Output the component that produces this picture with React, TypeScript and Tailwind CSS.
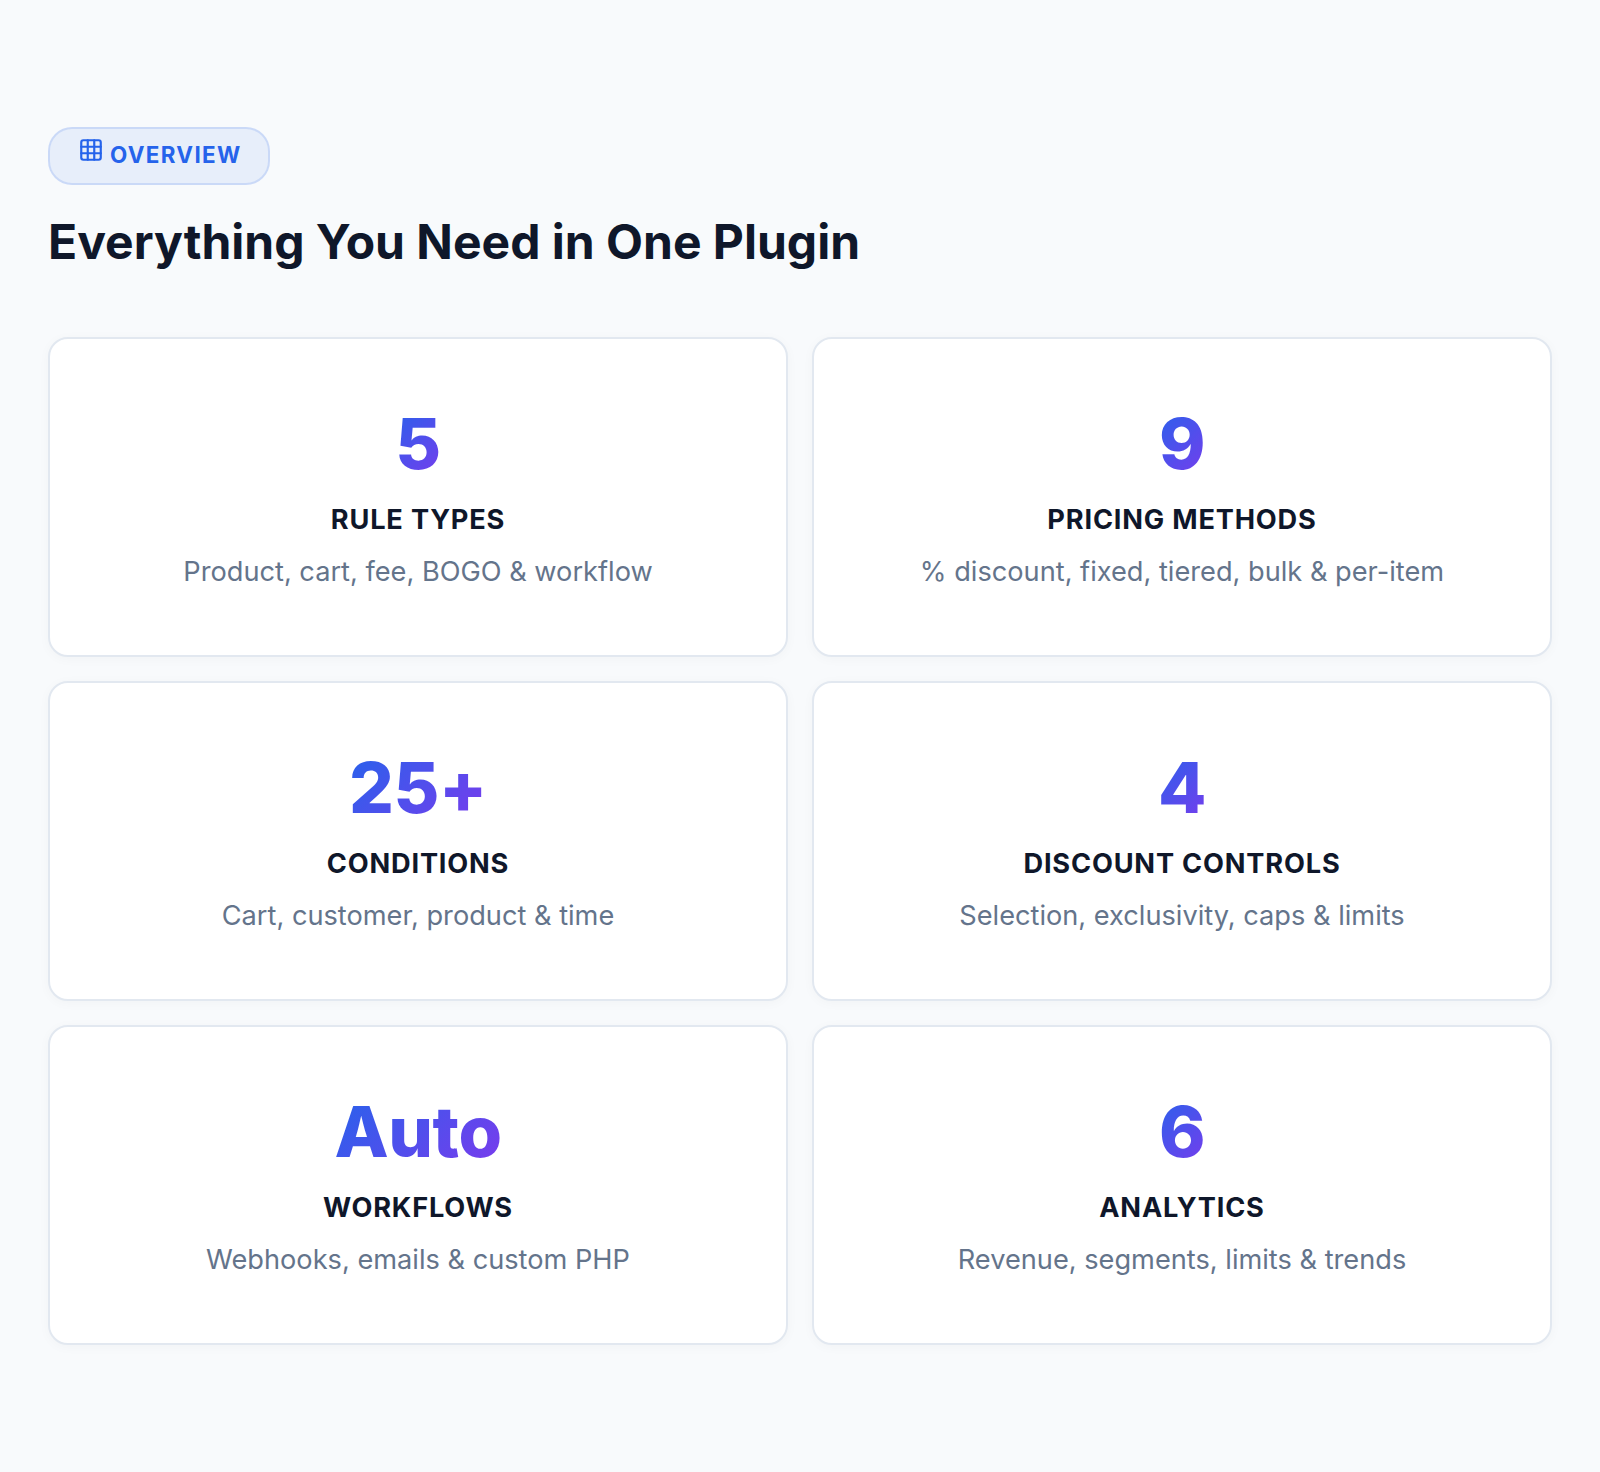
import { Grid3x3 } from "lucide-react";

const cards = [
  ["5", "RULE TYPES", "Product, cart, fee, BOGO & workflow"],
  ["9", "PRICING METHODS", "% discount, fixed, tiered, bulk & per-item"],
  ["25+", "CONDITIONS", "Cart, customer, product & time"],
  ["4", "DISCOUNT CONTROLS", "Selection, exclusivity, caps & limits"],
  ["Auto", "WORKFLOWS", "Webhooks, emails & custom PHP"],
  ["6", "ANALYTICS", "Revenue, segments, limits & trends"],
];

export default function App() {
  return (
    <div className="min-h-[1472px] bg-[#f8fafc] px-12 pt-[127px] font-['Inter',sans-serif]">
      <div className="inline-flex h-[58px] items-center gap-[6px] rounded-[24px] border-2 border-[#2563eb]/15 bg-[#2563eb]/[0.08] pl-[28px] pr-[26px] text-[#2563eb]">
        <Grid3x3 className="mb-[13px] h-[26px] w-[26px]" strokeWidth={2} />
        <span className="-mt-[3px] text-[22.4px] font-bold tracking-[0.06em]">OVERVIEW</span>
      </div>
      <h2 className="mt-[28px] text-[48px] font-bold leading-[1.2] text-[#0f172a]">Everything You Need in One Plugin</h2>
      <div className="mt-[66px] grid grid-cols-2 gap-6">
        {cards.map(([n, t, d]) => (
          <div key={t} className="flex h-[320px] flex-col items-center rounded-[20px] border-2 border-[#e2e8f0] bg-white pt-[63px] text-center shadow-[0_2px_12px_rgba(15,23,42,0.03)]">
            <div className="bg-[linear-gradient(135deg,#2563eb,#7c3aed)] bg-clip-text text-[70.4px] font-[840] leading-[1.2] tracking-[-0.005em] text-transparent">{n}</div>
            <div className="mt-[14px] text-[27.2px] font-bold tracking-[0.03em] text-[#0f172a]">{t}</div>
            <div className="mt-[11px] text-[27.2px] text-[#64748b]">{d}</div>
          </div>
        ))}
      </div>
    </div>
  );
}
